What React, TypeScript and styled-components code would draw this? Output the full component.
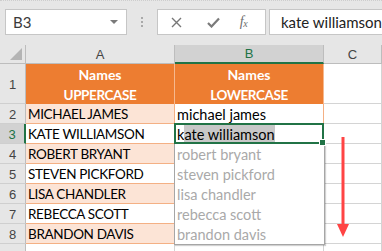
import React from 'react';
import styled, { createGlobalStyle, css } from 'styled-components';

const green = '#217346';
const orange = '#ED7D31';
const peach = '#FCE4D6';
const orangeLine = '#F4B084';
const headLine = '#BDBDBD';
const grid = '#D4D4D4';
const cellFont = `Lato, 'Liberation Sans', sans-serif`;

const GlobalStyle = createGlobalStyle`
  html, body {
    margin: 0;
    padding: 0;
    background: #fff;
  }
  body {
    font-family: ${cellFont};
    overflow: hidden;
  }
`;

const Window = styled.div`
  width: 382px;
  height: 251px;
  overflow: hidden;
  background: #e6e6e6;
  display: flex;
  flex-direction: column;
`;

const FormulaBar = styled.div`
  height: 45px;
  box-sizing: border-box;
  display: flex;
  align-items: flex-start;
  padding: 8px 0 0 5px;
  border-top: 1px dotted #cdcdcd;
  flex-shrink: 0;
`;

const Box = styled.div`
  height: 26px;
  box-sizing: border-box;
  background: #fff;
  border: 1px solid #c6c6c6;
  display: flex;
  align-items: center;
`;

const NameBox = styled(Box)`
  width: 122px;
  padding: 0 7px;
  justify-content: space-between;
  font-size: 15px;
  color: #3a3a3a;
`;

const Caret = styled.span`
  width: 0;
  height: 0;
  border-left: 4px solid transparent;
  border-right: 4px solid transparent;
  border-top: 4px solid #7a7a7a;
  margin-right: 1px;
`;

const Grip = styled.div`
  width: 31px;
  height: 26px;
  display: flex;
  flex-direction: column;
  align-items: center;
  justify-content: center;
  gap: 2px;
`;

const Dot = styled.span`
  width: 2px;
  height: 2px;
  background: #a9a9a9;
`;

const ButtonBox = styled(Box)`
  width: 109px;
  padding-left: 12px;
`;

const IconSlot = styled.span<{ $left: number; $width: number }>`
  display: flex;
  align-items: center;
  justify-content: center;
  width: ${p => p.$width}px;
  margin-left: ${p => p.$left}px;
  color: #7a7a7a;
`;

const Fx = styled.span`
  font-family: 'Liberation Serif', serif;
  font-style: italic;
  font-size: 14px;
  color: #6e6e6e;
  letter-spacing: -0.5px;

  sub {
    font-size: 10px;
    vertical-align: -1px;
  }
`;

const FormulaInput = styled(Box)`
  flex: 1;
  margin-left: 3px;
  padding-left: 11px;
  font-size: 15px;
  color: #222;
  border-right: none;
  white-space: nowrap;
`;

const Sheet = styled.div`
  position: relative;
  flex: 1;
  display: grid;
  grid-template-columns: 26px 149px 149px 1fr;
  grid-template-rows: 19px 40px repeat(8, 20px);
  background: #fff;
  font-size: 14.5px;
`;

const Corner = styled.div`
  position: relative;
  background: #e6e6e6;
  border-right: 1px solid ${headLine};
  border-bottom: 1px solid ${headLine};

  &::after {
    content: '';
    position: absolute;
    right: 3px;
    bottom: 3px;
    border-left: 12px solid transparent;
    border-bottom: 12px solid #b4b4b4;
  }
`;

const ColHeader = styled.div<{ $active?: boolean }>`
  box-sizing: border-box;
  display: flex;
  align-items: center;
  justify-content: center;
  font-family: 'Liberation Sans', sans-serif;
  font-size: 13px;
  color: ${p => (p.$active ? green : '#444')};
  background: ${p => (p.$active ? '#d2d2d2' : '#e6e6e6')};
  border-right: 1px solid ${headLine};
  border-bottom: ${p => (p.$active ? `2px solid ${green}` : `1px solid ${headLine}`)};
`;

const RowHeader = styled.div<{ $active?: boolean }>`
  box-sizing: border-box;
  display: flex;
  align-items: center;
  justify-content: center;
  font-family: 'Liberation Sans', sans-serif;
  font-size: 13px;
  padding-top: 1px;
  color: ${p => (p.$active ? green : '#444')};
  background: ${p => (p.$active ? '#d2d2d2' : '#e6e6e6')};
  border-right: ${p => (p.$active ? `2px solid ${green}` : `1px solid ${headLine}`)};
  border-bottom: 1px solid #cfcfcf;
`;

const TitleCell = styled.div`
  box-sizing: border-box;
  display: flex;
  flex-direction: column;
  align-items: center;
  justify-content: center;
  background: ${orange};
  color: #fff;
  font-weight: 700;
  font-size: 14px;
  line-height: 20px;
  padding-top: 1px;
  border-right: 1px solid #f6b88e;
`;

const TitleCaps = styled.span`
  letter-spacing: -0.4px;
  font-size: 13.5px;
`;

const Cell = styled.div<{ $band?: boolean; $plain?: boolean; $caps?: boolean }>`
  box-sizing: border-box;
  display: flex;
  align-items: center;
  padding: 1px 0 0 2px;
  white-space: nowrap;
  overflow: visible;
  color: #000;
  background: ${p => (p.$band ? peach : '#fff')};
  ${p =>
    p.$caps &&
    css`
      font-size: 13.5px;
      letter-spacing: -0.35px;
    `}
  ${p =>
    p.$plain
      ? css`
          border-right: 1px solid ${grid};
          border-bottom: 1px solid ${grid};
        `
      : css`
          border-right: 1px solid ${orangeLine};
          border-bottom: 1px solid ${orangeLine};
        `}
`;

const ActiveCell = styled(Cell)`
  position: relative;
  z-index: 2;

  &::after {
    content: '';
    position: absolute;
    left: -1px;
    right: -1px;
    top: -1px;
    bottom: -1px;
    border: 2px solid ${green};
    pointer-events: none;
  }
`;

const FillHandle = styled.span`
  position: absolute;
  right: -3px;
  bottom: -3px;
  width: 5px;
  height: 5px;
  background: ${green};
  border: 1px solid #fff;
  z-index: 3;
`;

const Suggested = styled.span`
  background: #c8c8c8;
  padding: 1px 0;
`;

const Preview = styled.div`
  position: relative;
  grid-row: span 5;
  display: flex;
  flex-direction: column;
  padding-left: 2px;
  background: #fff;
  color: #a9a9a9;

  &::after {
    content: '';
    position: absolute;
    left: -1px;
    right: -1px;
    top: 0;
    bottom: -1px;
    border: 1px solid #a6a6a6;
    border-top: none;
    box-shadow: 1px 1px 1px rgba(0, 0, 0, 0.18);
    pointer-events: none;
  }
`;

const PreviewLine = styled.div`
  height: 20px;
  display: flex;
  align-items: center;
  padding-top: 1px;
  white-space: nowrap;
`;

const Arrow = styled.svg`
  position: absolute;
  left: 337px;
  top: 92px;
  z-index: 4;
`;

const upper = ['MICHAEL JAMES', 'KATE WILLIAMSON', 'ROBERT BRYANT', 'STEVEN PICKFORD', 'LISA CHANDLER', 'REBECCA SCOTT', 'BRANDON DAVIS'];

export default function App() {
  const preview = upper.slice(2).map(n => n.toLowerCase());

  return (
    <>
      <GlobalStyle />
      <Window>
        <FormulaBar>
          <NameBox>
            B3
            <Caret />
          </NameBox>
          <Grip>
            <Dot />
            <Dot />
            <Dot />
          </Grip>
          <ButtonBox>
            <IconSlot $left={0} $width={12}>
              <svg width="11" height="11" viewBox="0 0 11 11">
                <path d="M1 1 L10 10 M10 1 L1 10" stroke="#777" strokeWidth="1.4" fill="none" />
              </svg>
            </IconSlot>
            <IconSlot $left={24} $width={14}>
              <svg width="13" height="11" viewBox="0 0 13 11">
                <path d="M1 6 L4.5 9.5 L12 1.5" stroke="#7a7a7a" strokeWidth="2.2" fill="none" />
              </svg>
            </IconSlot>
            <IconSlot $left={15} $width={16}>
              <Fx>
                f<sub>x</sub>
              </Fx>
            </IconSlot>
          </ButtonBox>
          <FormulaInput>kate williamson</FormulaInput>
        </FormulaBar>

        <Sheet>
          <Corner />
          <ColHeader>A</ColHeader>
          <ColHeader $active>B</ColHeader>
          <ColHeader>C</ColHeader>

          <RowHeader>1</RowHeader>
          <TitleCell>
            <span>Names</span>
            <TitleCaps>UPPERCASE</TitleCaps>
          </TitleCell>
          <TitleCell>
            <span>Names</span>
            <TitleCaps>LOWERCASE</TitleCaps>
          </TitleCell>
          <Cell $plain />

          <RowHeader>2</RowHeader>
          <Cell $band $caps>{upper[0]}</Cell>
          <Cell>michael james</Cell>
          <Cell $plain />

          <RowHeader $active>3</RowHeader>
          <Cell $caps>{upper[1]}</Cell>
          <ActiveCell>
            k<Suggested>ate williamson</Suggested>
            <FillHandle />
          </ActiveCell>
          <Cell $plain />

          {upper.slice(2).map((name, i) => (
            <React.Fragment key={name}>
              <RowHeader>{i + 4}</RowHeader>
              <Cell $band={i % 2 === 0} $caps>
                {name}
              </Cell>
              {i === 0 && (
                <Preview>
                  {preview.map(p => (
                    <PreviewLine key={p}>{p}</PreviewLine>
                  ))}
                </Preview>
              )}
              <Cell $plain />
            </React.Fragment>
          ))}

          <RowHeader />
          <Cell $plain />
          <Cell $plain />
          <Cell $plain />

          <Arrow width="12" height="100" viewBox="0 0 12 100">
            <rect x="4.5" y="0" width="3" height="89" fill="#ff4444" />
            <path d="M0 87 L12 87 L6 100 Z" fill="#ff4444" />
          </Arrow>
        </Sheet>
      </Window>
    </>
  );
}
